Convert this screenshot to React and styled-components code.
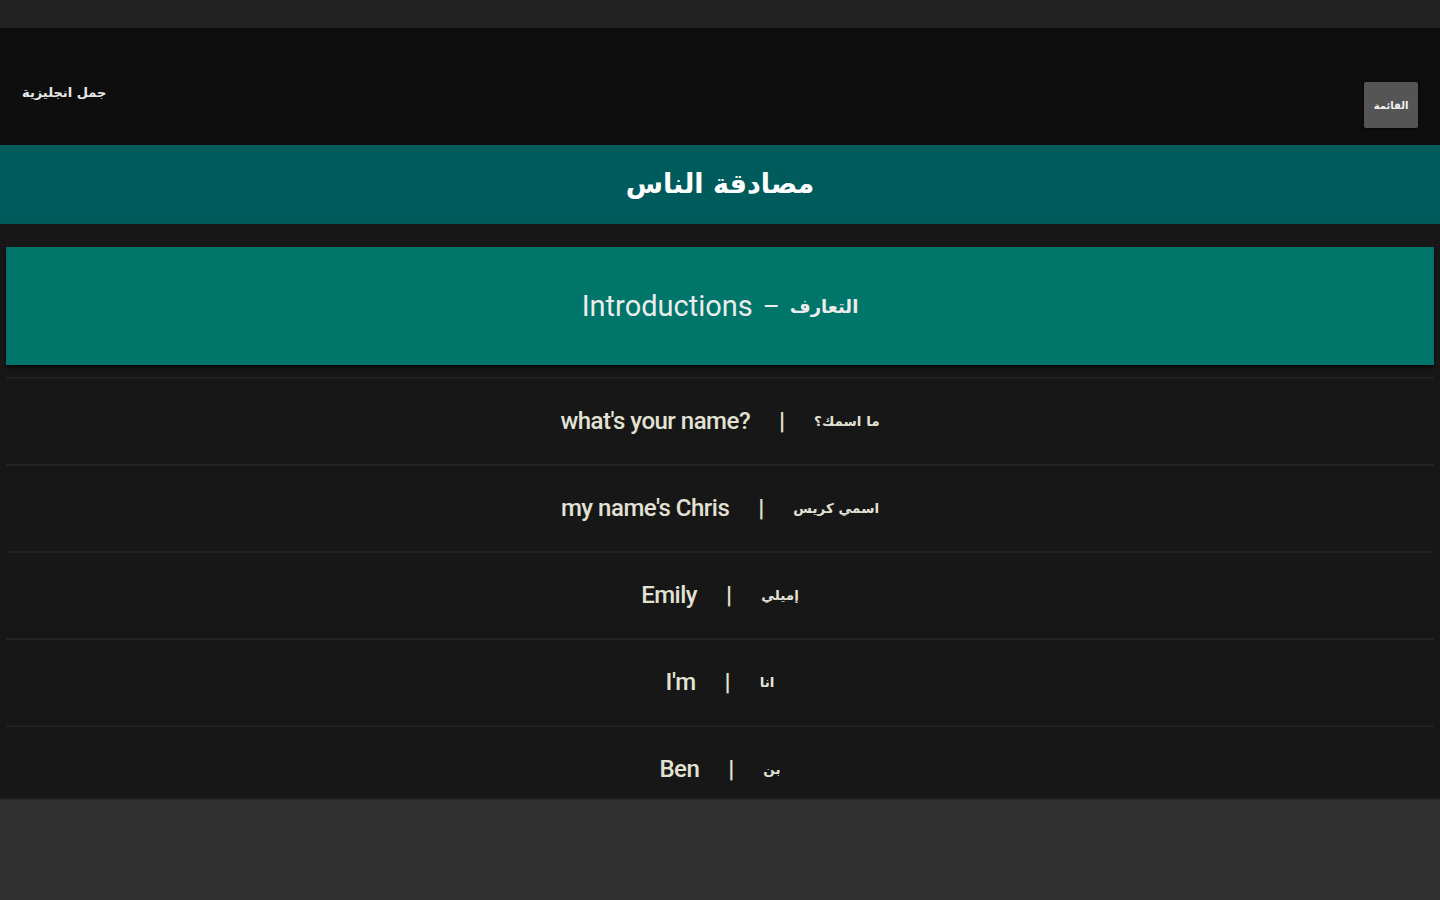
import React from "react";
import styled, { createGlobalStyle } from "styled-components";

const GlobalStyle = createGlobalStyle`
  html, body {
    margin: 0;
    padding: 0;
    background: #303030;
    font-family: Roboto, "DejaVu Sans", sans-serif;
  }
`;

const phrases = [
  { en: "what's your name?", ar: "ما اسمك؟" },
  { en: "my name's Chris", ar: "اسمي كريس" },
  { en: "Emily", ar: "إميلي" },
  { en: "I'm", ar: "انا" },
  { en: "Ben", ar: "بن" },
];

function App() {
  return (
    <Page>
      <GlobalStyle />
      <StatusBar />
      <Header>
        <MenuButton>القائمة</MenuButton>
        <AppName>جمل انجليزية</AppName>
      </Header>
      <TitleBar>مصادقة الناس</TitleBar>
      <Content>
        <Card>
          <CardEn>Introductions</CardEn>
          <CardDash>–</CardDash>
          <CardAr>التعارف</CardAr>
        </Card>
        <List>
          {phrases.map((p) => (
            <Row key={p.en}>
              <En>{p.en}</En>
              <Pipe>|</Pipe>
              <Ar>{p.ar}</Ar>
            </Row>
          ))}
        </List>
      </Content>
    </Page>
  );
}

const Page = styled.div`
  display: flex;
  flex-direction: column;
  width: 1440px;
  min-height: 900px;
  background: #303030;
`;

const StatusBar = styled.div`
  height: 28px;
  background: #222222;
`;

const Header = styled.div`
  height: 117px;
  background: #0e0e0e;
  display: flex;
  flex-direction: row-reverse;
  justify-content: space-between;
  align-items: flex-start;
  padding: 0 22px 0 22px;
  box-sizing: border-box;
`;

const AppName = styled.div`
  margin-top: 57px;
  color: #e6e6e6;
  font-family: "DejaVu Sans", sans-serif;
  font-weight: bold;
  font-size: 13px;
  direction: rtl;
  letter-spacing: -0.3px;
`;

const MenuButton = styled.div`
  margin-top: 54px;
  width: 54px;
  height: 46px;
  background: #555555;
  border-radius: 2px;
  box-shadow: 0 1px 3px rgba(0, 0, 0, 0.6);
  display: flex;
  align-items: center;
  justify-content: center;
  color: #f2f2f2;
  font-family: "DejaVu Sans", sans-serif;
  font-weight: bold;
  font-size: 10px;
  direction: rtl;
`;

const TitleBar = styled.div`
  height: 79px;
  background: #005c5c;
  display: flex;
  align-items: center;
  justify-content: center;
  color: #ffffff;
  font-family: "DejaVu Sans", sans-serif;
  font-weight: bold;
  font-size: 27px;
  direction: rtl;
  padding-bottom: 2px;
  box-sizing: border-box;
`;

const Content = styled.div`
  background: #171717;
  padding: 23px 6px 0;
  height: 574px;
  box-sizing: border-box;
  overflow: hidden;
  box-shadow: 0 1px 2px rgba(0, 0, 0, 0.5);
`;

const Card = styled.div`
  height: 118px;
  background: #00756a;
  box-shadow: 0 2px 3px rgba(0, 0, 0, 0.8);
  display: flex;
  align-items: center;
  justify-content: center;
  gap: 10px;
  color: #ececec;
`;

const CardEn = styled.span`
  font-family: Roboto, sans-serif;
  font-size: 29px;
`;

const CardDash = styled.span`
  font-family: Roboto, sans-serif;
  font-size: 26px;
`;

const CardAr = styled.span`
  font-family: "DejaVu Sans", sans-serif;
  font-weight: bold;
  font-size: 18px;
  direction: rtl;
`;

const List = styled.div`
  margin-top: 12px;
  display: flex;
  flex-direction: column;
`;

const Row = styled.div`
  height: 87px;
  border-top: 2px solid #222222;
  box-sizing: border-box;
  display: flex;
  align-items: center;
  justify-content: center;
  gap: 29px;
  color: #e2e2d4;
  padding-bottom: 2px;
`;

const En = styled.span`
  font-family: Roboto, sans-serif;
  font-weight: 500;
  font-size: 24px;
  letter-spacing: -0.5px;
`;

const Pipe = styled.span`
  font-family: Roboto, sans-serif;
  font-weight: bold;
  font-size: 24px;
`;

const Ar = styled.span`
  font-family: "DejaVu Sans", sans-serif;
  font-weight: bold;
  font-size: 13.5px;
  direction: rtl;
`;

export default App;
